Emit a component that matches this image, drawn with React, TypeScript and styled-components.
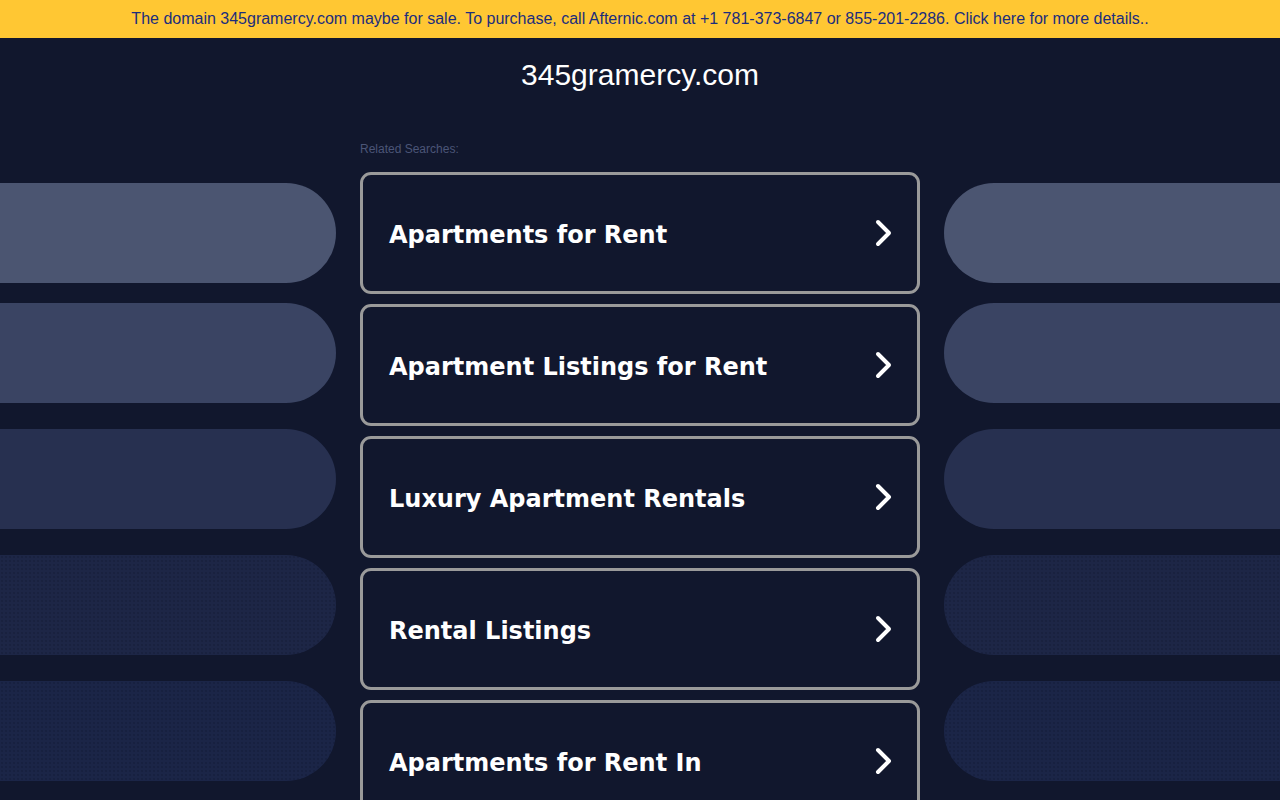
import React from "react";
import styled, { createGlobalStyle } from "styled-components";

const Global = createGlobalStyle`
  html, body { margin: 0; padding: 0; background: #11172d; }
  body { font-family: "Liberation Sans", Arial, sans-serif; overflow: hidden; }
`;

const Page = styled.div`
  min-height: 100vh;
  background: #11172d;
`;

const Banner = styled.div`
  height: 38px;
  background: #ffc733;
  color: #1c2d7c;
  font-family: "Liberation Sans", Arial, sans-serif;
  font-size: 16px;
  display: flex;
  align-items: center;
  justify-content: center;
`;

const Title = styled.h1`
  margin: 0;
  height: 74px;
  display: flex;
  align-items: center;
  justify-content: center;
  color: #ffffff;
  font-family: "Liberation Sans", Arial, sans-serif;
  font-weight: 400;
  font-size: 30px;
`;

const Grid = styled.div`
  display: grid;
  grid-template-columns: 336px 560px 336px;
  column-gap: 24px;
  padding-top: 29px;
`;

const Side = styled.div<{ $side: "left" | "right" }>`
  display: flex;
  flex-direction: column;
  padding-top: 42px;
  gap: 26px;
`;

const dotted = `radial-gradient(rgba(10, 16, 40, 0.35) 0.6px, transparent 0.9px)`;

const Pill = styled.div<{ $side: "left" | "right"; $color: string; $dots: boolean; $first?: boolean }>`
  height: 100px;
  background-color: ${(p) => p.$color};
  background-image: ${(p) => (p.$dots ? dotted : "none")};
  background-size: 4px 4px;
  border-radius: ${(p) => (p.$side === "left" ? "0 50px 50px 0" : "50px 0 0 50px")};
  margin-bottom: ${(p) => (p.$first ? "-6px" : "0")};
`;

const Center = styled.div`
  display: flex;
  flex-direction: column;
`;

const Related = styled.div`
  color: #4b5577;
  font-family: "Liberation Sans", Arial, sans-serif;
  font-size: 12px;
  line-height: 16px;
  margin-bottom: 15px;
`;

const Cards = styled.div`
  display: flex;
  flex-direction: column;
  gap: 10px;
`;

const Card = styled.a`
  box-sizing: border-box;
  height: 122px;
  border: 3px solid #9a9a9a;
  border-radius: 11px;
  display: flex;
  align-items: center;
  justify-content: space-between;
  padding: 3px 23px 0 26px;
  color: #ffffff;
  text-decoration: none;
  font-family: "DejaVu Sans", Verdana, sans-serif;
  font-weight: 700;
  font-size: 24px;
`;

const ChevronBox = styled.span`
  display: flex;
  margin-top: -4px;
`;

const Chevron = () => (
  <ChevronBox>
    <svg width="20" height="30" viewBox="0 0 20 30" fill="none">
      <path d="M4 4 L15 15 L4 26" stroke="#ffffff" strokeWidth="4" strokeLinecap="round" strokeLinejoin="round" />
    </svg>
  </ChevronBox>
);

const pills = [
  { color: "#4b5571", dots: false },
  { color: "#3a4463", dots: false },
  { color: "#273050", dots: false },
  { color: "#1d2646", dots: true },
  { color: "#1b2547", dots: true },
];

const items = [
  "Apartments for Rent",
  "Apartment Listings for Rent",
  "Luxury Apartment Rentals",
  "Rental Listings",
  "Apartments for Rent In",
];

const SideColumn = ({ side }: { side: "left" | "right" }) => (
  <Side $side={side}>
    {pills.map((p, i) => (
      <Pill key={i} $side={side} $color={p.color} $dots={p.dots} $first={i === 0} />
    ))}
  </Side>
);

export default function App() {
  return (
    <Page>
      <Global />
      <Banner>
        The domain 345gramercy.com maybe for sale. To purchase, call Afternic.com at +1 781-373-6847 or 855-201-2286. Click here for more details..
      </Banner>
      <Title>345gramercy.com</Title>
      <Grid>
        <SideColumn side="left" />
        <Center>
          <Related>Related Searches:</Related>
          <Cards>
            {items.map((t) => (
              <Card key={t} href="#">
                <span>{t}</span>
                <Chevron />
              </Card>
            ))}
          </Cards>
        </Center>
        <SideColumn side="right" />
      </Grid>
    </Page>
  );
}
